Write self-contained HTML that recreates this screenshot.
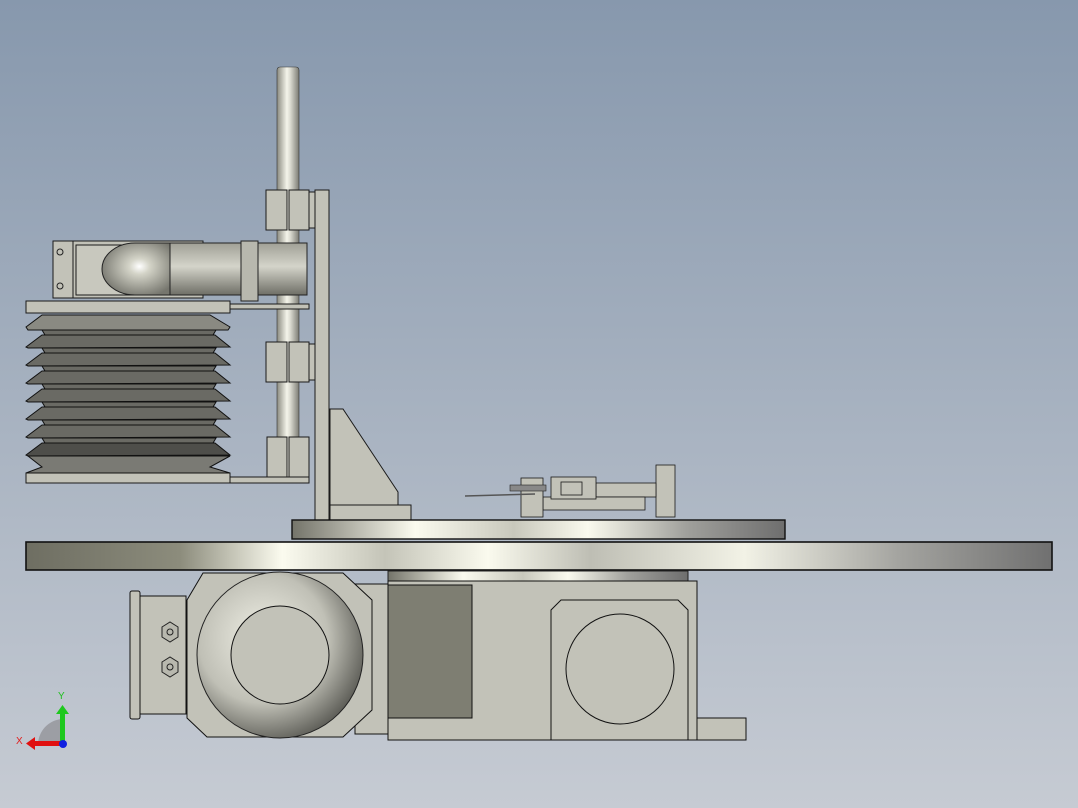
<!DOCTYPE html>
<html><head><meta charset="utf-8"><style>
html,body{margin:0;padding:0;width:1078px;height:808px;overflow:hidden}
svg{display:block}
</style></head><body>
<svg width="1078" height="808" viewBox="0 0 1078 808" xmlns="http://www.w3.org/2000/svg" font-family="Liberation Sans, sans-serif">
<defs>
<linearGradient id="bg" x1="0" y1="0" x2="0" y2="1">
<stop offset="0" stop-color="#8798ad"/><stop offset="1" stop-color="#c6cbd3"/>
</linearGradient>
<linearGradient id="rod" x1="0" y1="0" x2="1" y2="0">
<stop offset="0" stop-color="#8a8a80"/><stop offset="0.45" stop-color="#f4f4ea"/><stop offset="0.6" stop-color="#dcdcd2"/><stop offset="1" stop-color="#7c7c74"/>
</linearGradient>
<linearGradient id="disc" x1="0" y1="0" x2="1" y2="0">
<stop offset="0" stop-color="#6e6e62"/><stop offset="0.15" stop-color="#8c8c7c"/><stop offset="0.25" stop-color="#fbfbef"/><stop offset="0.35" stop-color="#c4c4b8"/><stop offset="0.45" stop-color="#fafaee"/><stop offset="0.55" stop-color="#bebeb4"/><stop offset="0.7" stop-color="#f2f2e6"/><stop offset="0.85" stop-color="#a4a4a0"/><stop offset="1" stop-color="#707070"/>
</linearGradient>
<linearGradient id="disc2" x1="0" y1="0" x2="1" y2="0">
<stop offset="0" stop-color="#74746a"/><stop offset="0.25" stop-color="#fbfbef"/><stop offset="0.45" stop-color="#c8c8bc"/><stop offset="0.6" stop-color="#fafaee"/><stop offset="0.8" stop-color="#a0a09c"/><stop offset="1" stop-color="#6e6e6e"/>
</linearGradient>
<linearGradient id="cyl" x1="0" y1="0" x2="0" y2="1">
<stop offset="0" stop-color="#a0a096"/><stop offset="0.45" stop-color="#d4d4ca"/><stop offset="1" stop-color="#6e6e66"/>
</linearGradient>
<radialGradient id="elb" cx="0.55" cy="0.45" r="0.6">
<stop offset="0" stop-color="#ffffff"/><stop offset="0.25" stop-color="#d4d4c8"/><stop offset="1" stop-color="#76766e"/>
</radialGradient>
<radialGradient id="tor" cx="0.4" cy="0.4" r="0.65">
<stop offset="0" stop-color="#f0f0e6"/><stop offset="0.6" stop-color="#c0c0b6"/><stop offset="1" stop-color="#5a5a54"/>
</radialGradient>
</defs>
<rect width="1078" height="808" fill="url(#bg)"/>

<rect x="277" y="67" width="22" height="410" rx="3" fill="url(#rod)" stroke="#333" stroke-width="0.6"/>

<g fill="#c2c2b8" stroke="#1a1a1a" stroke-width="1">
<rect x="315" y="190" width="14" height="330"/>
<path d="M330 409 L343 409 L398 492 L398 505 L330 505 Z"/>
<rect x="330" y="505" width="81" height="15"/>
<rect x="266" y="190" width="21" height="40"/><rect x="289" y="190" width="20" height="40"/><rect x="309" y="192" width="6" height="36"/>
<rect x="266" y="342" width="21" height="40"/><rect x="289" y="342" width="20" height="40"/><rect x="309" y="344" width="6" height="36"/>
<rect x="267" y="437" width="20" height="40"/><rect x="289" y="437" width="20" height="40"/>
<rect x="26" y="301" width="204" height="12"/>
<rect x="230" y="304" width="79" height="5"/>
<rect x="26" y="473" width="204" height="10"/>
<rect x="230" y="477" width="79" height="6"/>
<rect x="53" y="241" width="150" height="57"/>
<rect x="53" y="241" width="20" height="57"/>
<rect x="76" y="245" width="90" height="50" fill="#c8c8be"/>
</g>
<circle cx="60" cy="252" r="3" fill="none" stroke="#222"/>
<circle cx="60" cy="286" r="3" fill="none" stroke="#222"/>
<rect x="168" y="243" width="139" height="52" fill="url(#cyl)" stroke="#222"/>
<path d="M170 243 L135 243 A33 26 0 0 0 135 295 L170 295 Z" fill="url(#elb)" stroke="#222"/>
<rect x="241" y="241" width="17" height="60" fill="#b8b8ae" stroke="#222"/>

<g stroke="#111" stroke-width="1">
<path d="M26 327 L42 315 L210 315 L230 327 L228 330 L28 330 Z" fill="#8a8a82"/>
<g fill="#6a6a64">
<path d="M42 330 L216 330 L213 335 L45 335 Z"/>
<path d="M26 347 L42 335 L215 335 L230 347 L28 348 Z"/>
<path d="M42 348 L216 348 L213 353 L45 353 Z"/>
<path d="M26 365 L42 353 L215 353 L230 365 L28 366 Z"/>
<path d="M42 366 L216 366 L213 371 L45 371 Z"/>
<path d="M26 383 L42 371 L215 371 L230 383 L28 384 Z"/>
<path d="M42 384 L216 384 L213 389 L45 389 Z"/>
<path d="M26 401 L42 389 L215 389 L230 401 L28 402 Z"/>
<path d="M42 402 L216 402 L213 407 L45 407 Z"/>
<path d="M26 419 L42 407 L215 407 L230 419 L28 420 Z"/>
<path d="M42 420 L216 420 L213 425 L45 425 Z"/>
<path d="M26 437 L42 425 L215 425 L230 437 L28 438 Z"/>
<path d="M42 438 L216 438 L213 443 L45 443 Z"/>
<path d="M26 455 L42 443 L215 443 L230 455 L28 456 Z" fill="#4e4e4a"/>
<path d="M28 456 L230 456 L210 467 L230 473 L26 473 L42 467 Z" fill="#7a7a74"/>
</g>
</g>

<g fill="#c2c2b8" stroke="#1a1a1a" stroke-width="0.8">
<rect x="656" y="465" width="19" height="52"/>
<rect x="596" y="483" width="60" height="14"/>
<rect x="543" y="497" width="102" height="13"/>
<rect x="521" y="478" width="22" height="39"/>
<rect x="551" y="477" width="45" height="22"/>
<rect x="561" y="482" width="21" height="13"/>
</g>
<rect x="510" y="485" width="36" height="6" fill="#888" stroke="#222" stroke-width="0.6"/>
<line x1="465" y1="496" x2="535" y2="494" stroke="#555" stroke-width="1.5"/>

<rect x="292" y="520" width="493" height="19" fill="url(#disc2)" stroke="#111" stroke-width="1.4"/>
<rect x="26" y="542" width="1026" height="28" fill="url(#disc)" stroke="#111" stroke-width="1.6"/>
<rect x="388" y="571" width="300" height="10" fill="url(#disc2)" stroke="#222"/>

<g fill="#c2c2b8" stroke="#111" stroke-width="1">
<rect x="355" y="584" width="35" height="150"/>
<rect x="388" y="581" width="309" height="159"/>
<rect x="697" y="718" width="49" height="22"/>
<rect x="388" y="585" width="84" height="133" fill="#7e7e72"/>
<path d="M551 610 L561 600 L678 600 L688 610 L688 740 L551 740 Z"/>
</g>
<ellipse cx="620" cy="669" rx="54" ry="55" fill="none" stroke="#111"/>

<g fill="#c2c2b8" stroke="#111" stroke-width="1">
<path d="M203 573 L343 573 L372 600 L372 710 L343 737 L207 737 L187 718 L187 600 Z"/>
<rect x="134" y="596" width="52" height="118"/>
<rect x="130" y="591" width="10" height="128" rx="2"/>
</g>
<path d="M162 627 l8 -5 l8 5 v10 l-8 5 l-8 -5 Z" fill="#b8b8ae" stroke="#222"/>
<circle cx="170" cy="632" r="3" fill="none" stroke="#222"/>
<path d="M162 662 l8 -5 l8 5 v10 l-8 5 l-8 -5 Z" fill="#b8b8ae" stroke="#222"/>
<circle cx="170" cy="667" r="3" fill="none" stroke="#222"/>
<ellipse cx="280" cy="655" rx="83" ry="83" fill="url(#tor)" stroke="#222"/>
<ellipse cx="280" cy="655" rx="49" ry="49" fill="#c2c2b8" stroke="#111"/>

<path d="M38 745 A26 26 0 0 1 62 719 L62 745 Z" fill="#9c9ea4"/>
<rect x="60" y="713" width="5" height="30" fill="#1ec81e"/>
<path d="M56 714 L62.5 705 L69 714 Z" fill="#1ec81e"/>
<rect x="34" y="741" width="28" height="5" fill="#e01010"/>
<path d="M35 737 L26 743.5 L35 750 Z" fill="#e01010"/>
<circle cx="63" cy="744" r="4" fill="#1020e0"/>
<text x="58" y="699" font-size="10" fill="#20c020">Y</text>
<text x="16" y="744" font-size="10" fill="#e02020">X</text>
</svg>
</body></html>
